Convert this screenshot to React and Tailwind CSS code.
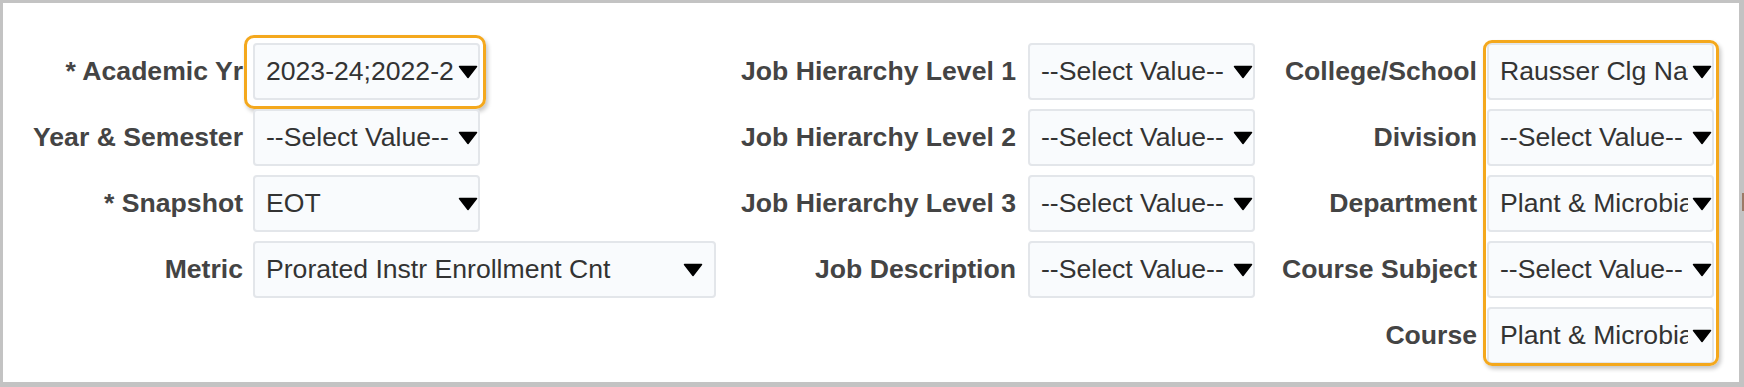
import React from "react";

function Arrow() {
  return (
    <svg width="20" height="14" viewBox="0 0 20 14" className="shrink-0">
      <path d="M1.5 1.5h17L10 12.5z" fill="#000" stroke="#000" strokeWidth="1.5" strokeLinejoin="round" />
    </svg>
  );
}

function Select({ value, wide, children }) {
  return (
    <div
      className={
        wide
          ? "relative flex h-[57px] w-[463px] items-center rounded-[4px] border-2 border-[#e3e6ea] bg-[#f9fbfd] pl-[11px] pr-[11px]"
          : "relative flex h-[57px] w-[227px] items-center rounded-[4px] border-2 border-[#e3e6ea] bg-[#f9fbfd] pl-[11px]"
      }
    >
      <span className="min-w-0 flex-1 overflow-hidden whitespace-nowrap leading-normal text-[#333]">{value}</span>
      <span className="ml-[4px] flex">
        <Arrow />
      </span>
      {children}
    </div>
  );
}

function Row({ label, labelWidth, gap, value, wide, children }) {
  return (
    <div className={`flex items-center ${gap}`}>
      <span className={`${labelWidth} whitespace-nowrap text-right font-bold text-[#444]`}>{label}</span>
      <Select value={value} wide={wide}>
        {children}
      </Select>
    </div>
  );
}

const rightCol = [
  ["College/School", "Rausser Clg Natural Resources"],
  ["Division", "--Select Value--"],
  ["Department", "Plant & Microbial Biology"],
  ["Course Subject", "--Select Value--"],
  ["Course", "Plant & Microbial Biology 10"],
];

export default function App() {
  return (
    <div className="relative box-border h-[387px] w-[1744px] border-t-[3px] border-l-[3px] border-r-[5px] border-b-[5px] border-[#c3c3c3] bg-white pt-[40px] font-['Liberation_Sans',Arial,sans-serif] text-[26.6px] leading-none">
      <div className="flex">
        {/* left column */}
        <div className="flex w-[717px] flex-col gap-[9px]">
          <Row label="* Academic Yr" labelWidth="w-[240px]" gap="gap-[10px]" value="2023-24;2022-23;2021-22">
            <div className="pointer-events-none absolute -left-[11px] -top-[10px] -right-[8px] -bottom-[11px] rounded-[10px] border-[3px] border-[#f4a81d] shadow-[2px_3px_4px_rgba(0,0,0,0.22)]" />
          </Row>
          <Row label="Year & Semester" labelWidth="w-[240px]" gap="gap-[10px]" value="--Select Value--" />
          <Row label="* Snapshot" labelWidth="w-[240px]" gap="gap-[10px]" value="EOT" />
          <Row label="Metric" labelWidth="w-[240px]" gap="gap-[10px]" value="Prorated Instr Enrollment Cnt" wide />
        </div>

        {/* middle column */}
        <div className="flex w-[535px] flex-col gap-[9px]">
          <Row label="Job Hierarchy Level 1" labelWidth="w-[296px]" gap="gap-[12px]" value="--Select Value--" />
          <Row label="Job Hierarchy Level 2" labelWidth="w-[296px]" gap="gap-[12px]" value="--Select Value--" />
          <Row label="Job Hierarchy Level 3" labelWidth="w-[296px]" gap="gap-[12px]" value="--Select Value--" />
          <Row label="Job Description" labelWidth="w-[296px]" gap="gap-[12px]" value="--Select Value--" />
        </div>

        {/* right column */}
        <div className="flex gap-[10px]">
          <div className="flex w-[222px] flex-col gap-[9px]">
            {rightCol.map(([label]) => (
              <span key={label} className="flex h-[57px] items-center justify-end whitespace-nowrap font-bold text-[#444]">
                {label}
              </span>
            ))}
          </div>
          <div className="relative flex flex-col gap-[9px]">
            {rightCol.map(([label, value]) => (
              <Select key={label} value={value} />
            ))}
            <div className="pointer-events-none absolute -left-[4px] -top-[3px] -right-[5px] -bottom-[2px] rounded-[9px] border-[3px] border-[#f4a81d] shadow-[2px_3px_4px_rgba(0,0,0,0.22)]" />
          </div>
        </div>
      </div>
      <span className="absolute -right-[5px] top-[190px] h-[18px] w-[2px] bg-[#9c7a66]" />
    </div>
  );
}
